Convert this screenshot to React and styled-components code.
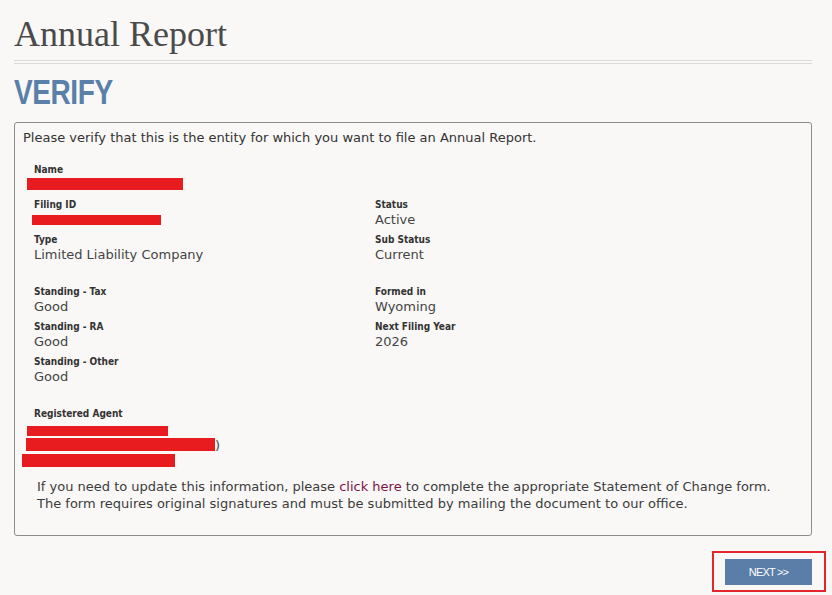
import React from 'react';
import styled, { createGlobalStyle } from 'styled-components';

const GlobalStyle = createGlobalStyle`
  html, body {
    margin: 0;
    padding: 0;
    background: #f9f8f6;
  }
  body {
    font-family: "DejaVu Sans", Verdana, sans-serif;
    color: #444;
  }
`;

const Page = styled.div`
  padding: 0 20px 0 14px;
`;

const Title = styled.h1`
  margin: 0;
  padding-top: 14px;
  font-family: "Liberation Serif", Georgia, serif;
  font-weight: normal;
  font-size: 36px;
  line-height: 40px;
  color: #4a4a4a;
`;

const DoubleRule = styled.div`
  margin-top: 6px;
  height: 2px;
  border-top: 1px solid #dcdad6;
  border-bottom: 1px solid #dcdad6;
`;

const StepHeading = styled.h2`
  margin: 8px 0 0;
  font-family: "Liberation Sans Narrow", "Arial Narrow", "Liberation Sans", sans-serif;
  font-weight: bold;
  font-size: 35px;
  line-height: 40px;
  letter-spacing: -0.5px;
  color: #5a7fa8;
  transform: scaleX(0.8);
  transform-origin: left center;
`;

const Panel = styled.section`
  margin-top: 10px;
  border: 1px solid #8c8c8c;
  border-radius: 3px;
  padding: 7px 8px 23px;
`;

const Intro = styled.p`
  margin: 0;
  font-size: 13px;
  line-height: 16px;
  color: #333;
`;

const FieldGrid = styled.div`
  display: grid;
  grid-template-columns: 341px 1fr;
  margin: 14px 0 0 11px;
`;

const Field = styled.div`
  display: flex;
  flex-direction: column;
  grid-column: ${p => (p.$wide ? '1 / -1' : 'auto')};
`;

const Spacer = styled.div`
  grid-column: 1 / -1;
  height: ${p => p.$h}px;
`;

const Label = styled.div`
  padding-top: 4px;
  font-family: "DejaVu Sans Condensed", "DejaVu Sans", Verdana, sans-serif;
  font-stretch: condensed;
  font-size: 10px;
  font-weight: bold;
  line-height: 11px;
  color: #333;
`;

const Value = styled.div`
  font-size: 13px;
  line-height: 20px;
  height: 20px;
  color: #444;
`;

const AgentLines = styled.div`
  display: flex;
  flex-direction: column;
  padding-top: 7px;
`;

const Redacted = styled.div`
  width: ${p => p.$w}px;
  height: ${p => p.$h}px;
  margin-left: ${p => p.$dx}px;
  margin-top: ${p => p.$dy || 0}px;
  background: #e81c1f;
`;

const AgentRow = styled.div`
  display: flex;
  align-items: flex-end;
  margin-top: ${p => p.$dy || 0}px;
`;

const Tail = styled.span`
  font-size: 13px;
  line-height: 13px;
  color: #444;
  margin-bottom: -1px;
`;

const Note = styled.p`
  margin: 11px 0 0 14px;
  font-size: 13px;
  line-height: 17px;
  color: #3c3c3c;
`;

const NoteLink = styled.a`
  color: #7d1446;
  text-decoration: none;
`;

const ButtonRow = styled.div`
  display: flex;
  justify-content: flex-end;
  margin-top: 15px;
`;

const Highlight = styled.div`
  border: 2px solid #e3262b;
  padding: 6px 12px 5px 11px;
  margin-right: -14px;
`;

const NextButton = styled.button`
  display: block;
  width: 87px;
  height: 26px;
  border: none;
  background: #5a7ea7;
  color: #fff;
  font-family: "Liberation Sans", Arial, sans-serif;
  font-size: 11px;
  letter-spacing: -0.8px;
  cursor: pointer;
`;

const fields = [
  [{ label: 'Filing ID', redact: { w: 129, h: 10, dx: -2, dy: 5 } }, { label: 'Status', value: 'Active' }],
  [{ label: 'Type', value: 'Limited Liability Company' }, { label: 'Sub Status', value: 'Current' }],
];

const standing = [
  [{ label: 'Standing - Tax', value: 'Good' }, { label: 'Formed in', value: 'Wyoming' }],
  [{ label: 'Standing - RA', value: 'Good' }, { label: 'Next Filing Year', value: '2026' }],
  [{ label: 'Standing - Other', value: 'Good' }, null],
];

function Item({ item }) {
  if (!item) return <div />;
  return (
    <Field>
      <Label>{item.label}</Label>
      <Value>
        {item.redact ? (
          <Redacted $w={item.redact.w} $h={item.redact.h} $dx={item.redact.dx} $dy={item.redact.dy} />
        ) : (
          item.value
        )}
      </Value>
    </Field>
  );
}

export default function App() {
  return (
    <Page>
      <GlobalStyle />
      <Title>Annual Report</Title>
      <DoubleRule />
      <StepHeading>VERIFY</StepHeading>

      <Panel>
        <Intro>Please verify that this is the entity for which you want to file an Annual Report.</Intro>

        <FieldGrid>
          <Field $wide>
            <Label>Name</Label>
            <Value>
              <Redacted $w={156} $h={12} $dx={-7} $dy={3} />
            </Value>
          </Field>
          {fields.map((row, i) => row.map((item, j) => <Item key={`a${i}${j}`} item={item} />))}
          <Spacer $h={17} />
          {standing.map((row, i) => row.map((item, j) => <Item key={`b${i}${j}`} item={item} />))}
          <Spacer $h={17} />
          <Field $wide>
            <Label>Registered Agent</Label>
            <AgentLines>
              <Redacted $w={141} $h={10} $dx={-7} />
              <AgentRow $dy={2}>
                <Redacted $w={189} $h={13} $dx={-8} />
                <Tail>)</Tail>
              </AgentRow>
              <Redacted $w={153} $h={13} $dx={-12} $dy={3} />
            </AgentLines>
          </Field>
        </FieldGrid>

        <Note>
          If you need to update this information, please <NoteLink href="#">click here</NoteLink> to complete the
          appropriate Statement of Change form.
          <br />
          The form requires original signatures and must be submitted by mailing the document to our office.
        </Note>
      </Panel>

      <ButtonRow>
        <Highlight>
          <NextButton>NEXT &gt;&gt;</NextButton>
        </Highlight>
      </ButtonRow>
    </Page>
  );
}
